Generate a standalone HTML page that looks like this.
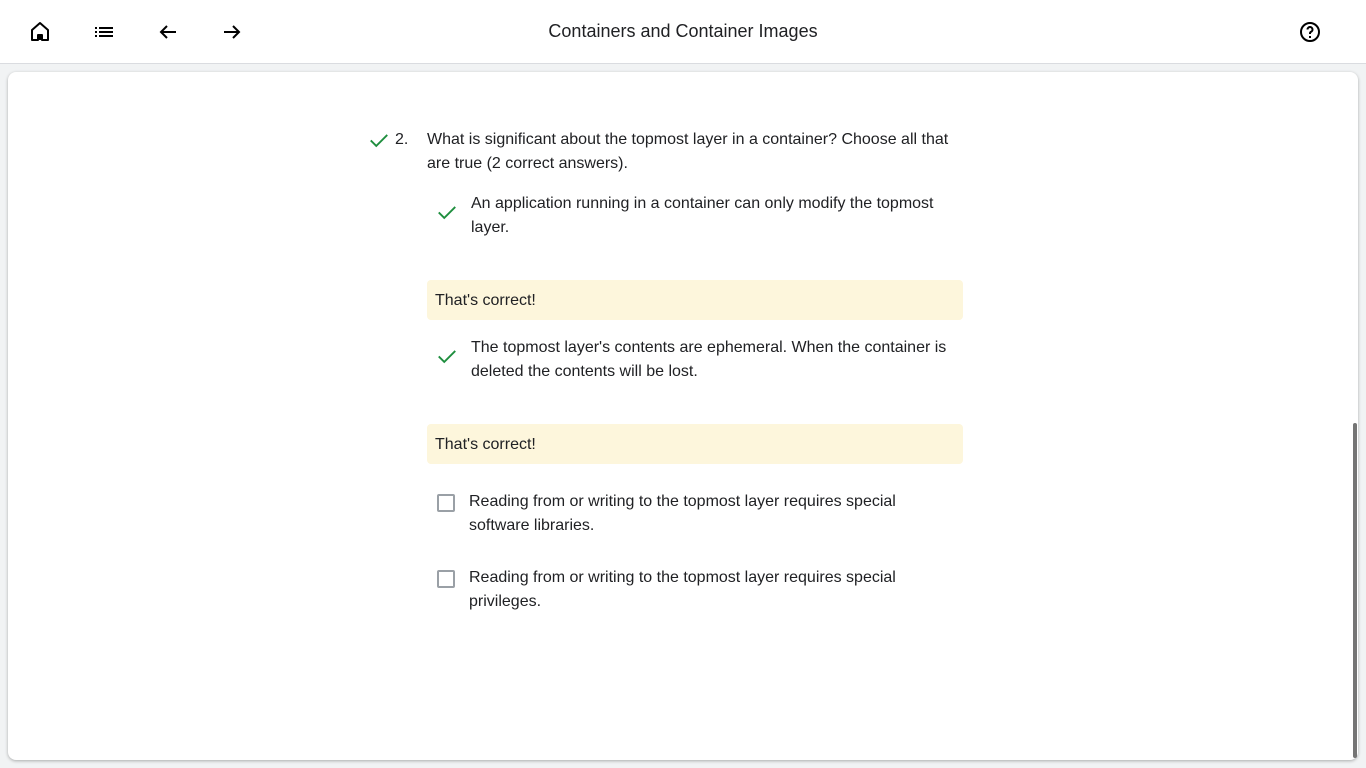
<!DOCTYPE html>
<html><head><meta charset="utf-8"><style>
body{margin:0;width:1366px;height:768px;background:#f1f3f4;font-family:"Liberation Sans",sans-serif;color:#202124;position:relative;overflow:hidden}
.top{position:absolute;left:0;top:0;width:1366px;height:63px;background:#fff;border-bottom:1px solid #dadce0}
.title{position:absolute;left:0;width:1366px;top:21px;text-align:center;font-size:18px;color:#202124}
.card{position:absolute;left:8px;top:72px;width:1350px;height:688px;background:#fff;border-radius:8px;box-shadow:0 1px 3px rgba(0,0,0,.3)}
.t{position:absolute;font-size:16px;white-space:nowrap;line-height:24px}
.fb{position:absolute;left:427px;width:536px;height:40px;background:#fdf6dc;border-radius:4px}
.fb span{position:absolute;left:8px;top:9px;font-size:16px;line-height:24px}
.cb{position:absolute;width:14px;height:14px;border:2px solid #9aa0a6;border-radius:2px}
.sb{position:absolute;left:1353px;top:423px;width:4px;height:335px;background:#757575;border-radius:2px}
svg{position:absolute}
</style></head><body>
<div class="top">
<svg style="left:28px;top:20px" width="24" height="24" viewBox="0 0 24 24"><path d="M12 3L4 10v10h6v-5h4v5h6V10z" fill="none" stroke="#000" stroke-width="2" stroke-linejoin="round"/><rect x="10" y="14" width="4" height="6" fill="#000"/></svg>
<svg style="left:92px;top:20px" width="24" height="24" viewBox="0 0 24 24"><path d="M3 7h2v2H3zm4 0h14v2H7zM3 11h2v2H3zm4 0h14v2H7zM3 15h2v2H3zm4 0h14v2H7z" fill="#000"/></svg>
<svg style="left:156px;top:20px" width="24" height="24" viewBox="0 0 24 24"><path d="M20 12H5M11 6l-6 6 6 6" fill="none" stroke="#000" stroke-width="2"/></svg>
<svg style="left:220px;top:20px" width="24" height="24" viewBox="0 0 24 24"><path d="M4 12h15M13 6l6 6-6 6" fill="none" stroke="#000" stroke-width="2"/></svg>
<div class="title">Containers and Container Images</div>
<svg style="left:1298px;top:20px" width="24" height="24" viewBox="0 0 24 24"><circle cx="12" cy="12" r="9" fill="none" stroke="#000" stroke-width="2"/><path d="M9.5 9.5a2.5 2.5 0 1 1 3.5 2.3c-.7.4-1 .9-1 1.7v.5" fill="none" stroke="#000" stroke-width="2"/><rect x="11" y="16" width="2" height="2" fill="#000"/></svg>
</div>
<div class="card"></div>
<div class="sb"></div>
<svg style="left:368px;top:129px" width="22" height="22" viewBox="0 0 24 24"><path d="M3 12.5l6 6L21 6.5" fill="none" stroke="#1e8e3e" stroke-width="2"/></svg>
<div class="t" style="left:395px;top:128px">2.</div>
<div class="t" style="left:427px;top:128px">What is significant about the topmost layer in a container? Choose all that</div>
<div class="t" style="left:427px;top:152px">are true (2 correct answers).</div>
<svg style="left:436px;top:201px" width="22" height="22" viewBox="0 0 24 24"><path d="M3 12.5l6 6L21 6.5" fill="none" stroke="#1e8e3e" stroke-width="2"/></svg>
<div class="t" style="left:471px;top:192px">An application running in a container can only modify the topmost</div>
<div class="t" style="left:471px;top:216px">layer.</div>
<div class="fb" style="top:280px"><span>That's correct!</span></div>
<svg style="left:436px;top:345px" width="22" height="22" viewBox="0 0 24 24"><path d="M3 12.5l6 6L21 6.5" fill="none" stroke="#1e8e3e" stroke-width="2"/></svg>
<div class="t" style="left:471px;top:336px">The topmost layer's contents are ephemeral. When the container is</div>
<div class="t" style="left:471px;top:360px">deleted the contents will be lost.</div>
<div class="fb" style="top:424px"><span>That's correct!</span></div>
<div class="cb" style="left:437px;top:494px"></div>
<div class="t" style="left:469px;top:490px">Reading from or writing to the topmost layer requires special</div>
<div class="t" style="left:469px;top:514px">software libraries.</div>
<div class="cb" style="left:437px;top:570px"></div>
<div class="t" style="left:469px;top:566px">Reading from or writing to the topmost layer requires special</div>
<div class="t" style="left:469px;top:590px">privileges.</div>
</body></html>
